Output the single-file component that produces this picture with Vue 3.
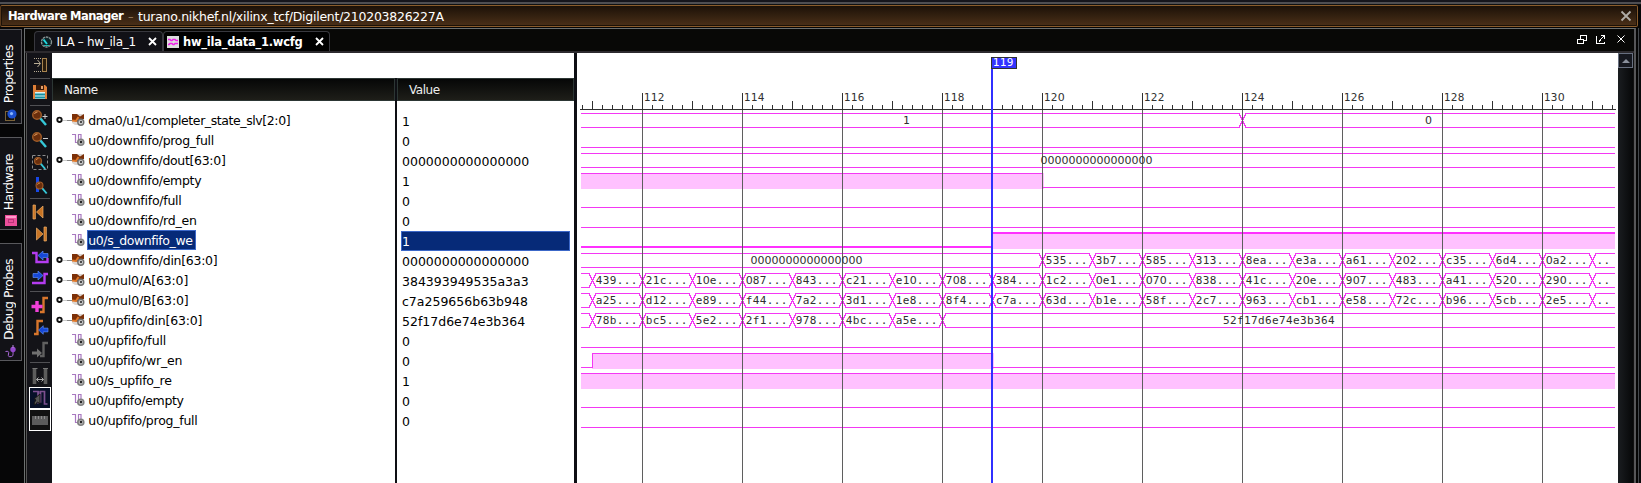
<script setup>
const rows = [
  { name: 'dma0/u1/completer_state_slv[2:0]', value: '1', bus: true, ls: -0.41 },
  { name: 'u0/downfifo/prog_full', value: '0', ls: -0.3 },
  { name: 'u0/downfifo/dout[63:0]', value: '0000000000000000', bus: true, ls: -0.32 },
  { name: 'u0/downfifo/empty', value: '1', ls: -0.3 },
  { name: 'u0/downfifo/full', value: '0', ls: -0.25 },
  { name: 'u0/downfifo/rd_en', value: '0', ls: -0.26 },
  { name: 'u0/s_downfifo_we', value: '1', selected: true, ls: -0.4 },
  { name: 'u0/downfifo/din[63:0]', value: '0000000000000000', bus: true, ls: -0.29 },
  { name: 'u0/mul0/A[63:0]', value: '384393949535a3a3', bus: true, ls: -0.16 },
  { name: 'u0/mul0/B[63:0]', value: 'c7a259656b63b948', bus: true, ls: -0.13 },
  { name: 'u0/upfifo/din[63:0]', value: '52f17d6e74e3b364', bus: true, ls: -0.17 },
  { name: 'u0/upfifo/full', value: '0', ls: -0.1 },
  { name: 'u0/upfifo/wr_en', value: '0', ls: -0.23 },
  { name: 'u0/s_upfifo_re', value: '1', ls: -0.3 },
  { name: 'u0/upfifo/empty', value: '0', ls: -0.32 },
  { name: 'u0/upfifo/prog_full', value: '0', ls: -0.25 },
]

// Wave canvas coordinates: x = 0 is the pane's left edge, y = 0 its top.
const X0 = 4
const X1 = 1038
const sx = (n) => 65 + (n - 112) * 50
const top = (r) => 60 + r * 20
const bot = (r) => 74 + r * 20

const ticks = []
for (let k = 0; k <= 103; k++) {
  const x = 5 + k * 10
  if (x > 1036) break
  const off = x - 65
  ticks.push({ x, h: off % 100 === 0 ? 16 : off % 50 === 0 ? 8 : 4 })
}
const majors = [112, 114, 116, 118, 120, 122, 124, 126, 128, 130]

const lows = [
  [1, X0, X1], [3, sx(120), X1], [4, X0, X1], [5, X0, X1], [11, X0, X1],
  [12, X0, sx(111)], [12, sx(119), X1], [14, X0, X1], [15, X0, X1],
]
const highs = [[3, X0, sx(120)], [12, sx(111), sx(119)], [13, X0, X1]]

const buses = [
  { r: 0, t: [124] },
  { r: 2, t: [] },
  { r: 7, t: range(120, 131) },
  { r: 8, t: range(111, 131) },
  { r: 9, t: range(111, 131) },
  { r: 10, t: range(111, 118) },
]
function range(a, b) {
  return Array.from({ length: b - a + 1 }, (_, i) => a + i)
}
function busPath({ r, t }) {
  const a = top(r) + 0.5
  const b = bot(r) + 0.5
  let d = ''
  let x = X0
  for (const n of t) {
    const c = sx(n) + 0.5
    d += `M${x} ${a}H${c - 3.5}L${c + 3.5} ${b}M${x} ${b}H${c - 3.5}L${c + 3.5} ${a}`
    x = c + 3.5
  }
  return d + `M${x} ${a}H${X1}M${x} ${b}H${X1}`
}

const cells = {
  7: [120, '535 3b7 585 313 8ea e3a a61 202 c35 6d4 0a2'],
  8: [111, '439 21c 10e 087 843 c21 e10 708 384 1c2 0e1 070 838 41c 20e 907 483 a41 520 290'],
  9: [111, 'a25 d12 e89 f44 7a2 3d1 1e8 8f4 c7a 63d b1e 58f 2c7 963 cb1 e58 72c b96 5cb 2e5'],
  10: [111, '78b bc5 5e2 2f1 978 4bc a5e'],
}
const labels = [
  { x: 326, y: 71, s: '1' },
  { x: 848, y: 71, s: '0' },
  { x: 463.5, y: 111, s: '0000000000000000' },
  { x: 173.5, y: 211, s: '0000000000000000' },
  { x: 646, y: 271, s: '52f17d6e74e3b364' },
]
for (const r of Object.keys(cells)) {
  const [start, list] = cells[r]
  list.split(' ').forEach((s, i) => {
    labels.push({ x: sx(start + i) + 3.7, y: 71 + r * 20, s: s + '...' })
  })
}
for (const r of [7, 8, 9]) labels.push({ x: 1019.6, y: 71 + r * 20, s: '..' })
for (const n of majors) labels.push({ x: sx(n) + 1.7, y: 48, s: String(n) })
labels.forEach((l) => (l.runs = l.s.match(/0+|[^0]+/g)))
</script>

<template>
  <div class="app">
    <div class="topline"></div>
    <div class="titlebar">
      <b>Hardware Manager</b><i>–</i><span>turano.nikhef.nl/xilinx_tcf/Digilent/210203826227A</span>
      <svg class="tclose" width="12" height="12" viewBox="0 0 12 12"><path d="M1.5 1.5L10.5 10.5M10.5 1.5L1.5 10.5" stroke="#b0aca6" stroke-width="1.8" /></svg>
    </div>
    <div class="body">
      <div class="side">
        <div class="stab p1">
          <span>Properties</span>
          <svg width="12" height="12" viewBox="0 0 12 12"><rect x=".5" y="2.5" width="9" height="9" fill="#111" stroke="#7a6238" /><circle cx="7" cy="5" r="4.6" fill="#1d50d0" /><circle cx="6.5" cy="4.6" r="1.6" fill="#8bb6ff" /></svg>
        </div>
        <div class="stab p2">
          <span>Hardware</span>
          <svg width="12" height="11" viewBox="0 0 12 11"><rect width="12" height="11" fill="#ec4f9c" /><rect x="1" y="1" width="10" height="2" fill="#ff9ccc" /><rect x="3.5" y="4.5" width="5" height="3" fill="none" stroke="#8a1c56" stroke-dasharray="1 1" /></svg>
        </div>
        <div class="stab p3">
          <span>Debug Probes</span>
          <svg width="12" height="13" viewBox="0 0 12 13"><path d="M.5 6.500q4-1 3 2.500t3 2.500q2 0 1.500-5" fill="none" stroke="#a868d8" /><circle cx="8" cy="4.500" r="2.700" fill="#9448cc" /><path d="M8 0v3" stroke="#b88ae0" /></svg>
        </div>
      </div>
      <div class="panel">
        <div class="tabs">
          <div class="tab t1">
            <svg width="13" height="12" viewBox="0 0 13 12"><circle cx="6.500" cy="6" r="5" fill="#0c2428" stroke="#8a9494" stroke-width="1.300" stroke-dasharray="2.500 .7" /><path d="M7 8L3.500 3.500" stroke="#20d8e0" stroke-width="2" /><path d="M4 9.500h5" stroke="#20b8b0" /></svg>
            <span>ILA – hw_ila_1</span>
            <svg class="x" width="9" height="9" viewBox="0 0 9 9"><path d="M1 1L8 8M8 1L1 8" stroke="#fff" stroke-width="1.800" /></svg>
          </div>
          <div class="tab t2">
            <svg width="12" height="12" viewBox="0 0 12 12"><rect width="12" height="12" fill="#ddd" /><path d="M1 3.500h2l1 1h1l1-1h2l1 1h2M1 8.500h1l1-1h2l1 1h1l1-1h3" fill="none" stroke="#f020e8" stroke-width="1.500" /></svg>
            <b>hw_ila_data_1.wcfg</b>
            <svg class="x" width="9" height="9" viewBox="0 0 9 9"><path d="M1 1L8 8M8 1L1 8" stroke="#fff" stroke-width="1.800" /></svg>
          </div>
          <svg class="winbtns" width="49" height="10" viewBox="0 0 49 10" fill="none" stroke="#fff" shape-rendering="crispEdges">
            <path d="M3.500 4V.500h6v5H7M.500 4.500h6v4h-6z" /><path d="M0 4.500h7" />
            <path d="M19.500 1v7.500h8V7M22 6.500l4.500-5M24 .500h3.500V4" />
            <path d="M40.500 .500L47.500 7.500M47.500 .500L40.500 7.500" shape-rendering="auto" />
          </svg>
        </div>
        <div class="content">
          <svg class="tools" width="24" height="430" viewBox="28 53 24 430">
            <defs>
              <g id="mag"><path d="M3 3L9 10" stroke="#35c8d8" stroke-width="2.400" /><circle r="4.300" fill="#6a2e0c" stroke="#a05c28" stroke-width="1.400" /><path d="M-2.500-1a3 3 0 0 1 3-2" fill="none" stroke="#e8a060" /></g>
              <path id="arr" d="M0 0L5-4.500V-2H10V2H5V4.500Z" fill="#1648d8" stroke="#5c8cf0" stroke-width=".7" />
            </defs>
            <path d="M30 78.500H50M30 105.500H50M30 198.500H50M30 291.500H50M30 362.500H50" stroke="#505054" />
            <g fill="none" stroke="#b8ac94"><path d="M34 58.500h8M34 71.500h8" stroke-dasharray="1 1" /><path d="M34 63.500h6M37.500 60l3 3.500l-3 3.500" /><rect x="42.500" y="58.500" width="4" height="13" fill="#2a1c0c" stroke="#a88450" /></g>
            <g><path d="M33 85h12l2 2v12H33z" fill="#e08038" /><rect x="36" y="85" width="8" height="5" fill="#3a1a08" /><rect x="41" y="86" width="2" height="3" fill="#e0a070" /><rect x="35" y="92" width="10" height="7" fill="#d8f4f4" /><path d="M35 94.500h10M35 97.500h10" stroke="#1890a0" stroke-width="1.800" /></g>
            <use href="#mag" x="37" y="115" /><path d="M42.500 116.500h5M45 114v5" stroke="#ccc" />
            <use href="#mag" x="37" y="137" /><path d="M43 138.500h5" stroke="#ccc" />
            <rect x="32.500" y="155.500" width="15" height="14" fill="none" stroke="#8c8c8c" stroke-dasharray="3 2" />
            <g transform="translate(38 161) scale(.8)"><use href="#mag" /></g>
            <path d="M37.500 177v15" stroke="#1848e8" stroke-width="3" />
            <g transform="translate(39.500 185.500) scale(.8)"><use href="#mag" /></g>
            <g fill="#c87424" stroke="#f0b068" stroke-width=".7"><path d="M33 205h2.400v14H33zM43 206v12l-6.500-6z" /><path d="M44 227h2.400v14H44zM36.500 228v12l6.500-6z" /></g>
            <g fill="none" stroke="#b43cf0" stroke-width="2.400"><path d="M32 253h4.500v9h11v-4" /><path d="M32 283h12.500v-9H48" /></g>
            <use href="#arr" x="38" y="255.500" /><use href="#arr" transform="translate(43 275.500) scale(-1 1)" />
            <g fill="none" stroke-width="2.400"><path d="M40 312h3.500v-14H48" stroke="#d8762c" /><path d="M34 334h3.500v-13H43" stroke="#d8762c" /><path d="M40 356h3.500v-13H48" stroke="#606060" /></g>
            <path d="M37 301v11M31.500 306.500h11" stroke="#f040d8" stroke-width="3.400" />
            <g transform="translate(38.500 330) scale(.95)"><use href="#arr" /></g>
            <path d="M32 351.500h5v-3l5 4.500l-5 4.500v-3h-5z" fill="#707070" />
            <path d="M34.500 368v16M45.500 368v16" stroke="#5c5c5c" stroke-width="3.600" /><path d="M32.500 368.500h5M43 368.500h5" stroke="#777" />
            <path d="M36.500 379.500h7M38.500 377.500l-2 2l2 2M41.500 377.500l2 2l-2 2" stroke="#aaa" fill="none" />
            <rect x="29.500" y="387.500" width="21" height="21" fill="#071028" stroke="#fff" />
            <path d="M33 391.500h5v12M38.500 391v11h2v-10.500h4v12.500h3" stroke="#7c5090" stroke-width="1.700" fill="none" /><path d="M40 394v10l-2.500-2l-2.500 3l-1-2l2-3l-2-1z" fill="#555" stroke="#141414" />
            <rect x="29.500" y="409.500" width="21" height="21" fill="#101010" stroke="#fff" />
            <rect x="32" y="416" width="16" height="9" fill="#5a5a5a" /><path d="M35.500 416v3M38.500 416v3M41.500 416v3M44.500 416v3" stroke="#8c8c8c" />
          </svg>
          <div class="lists">
            <div class="pad"></div>
            <div class="cols">
              <div class="names">
                <div class="hd">Name</div>
                <div v-for="r in rows" :key="r.name" class="row">
                  <svg v-if="r.bus" width="35" height="20" viewBox="0 0 35 20">
                    <path d="M11 10.500h4" stroke="#ccc" /><path d="M15 10.500h5" stroke="#888" /><circle cx="7.500" cy="9.800" r="2.200" fill="#fff" stroke="#111" stroke-width="1.900" />
                    <path d="M20 4h12v5l-4 6h-5l-3-2z" fill="#dcd6d2" /><path d="M20 4h5l3 2.500l4-2.500v5h-4l-2 3l-6-2z" fill="#7c3008" /><path d="M20 10.500l4 .5l2.500-4" stroke="#e07828" stroke-width="2" fill="none" />
                    <circle cx="28.800" cy="12.200" r="3" fill="#c8c8c8" stroke="#707070" stroke-width="1.400" /><circle cx="29" cy="12" r="1" fill="#222" />
                  </svg>
                  <svg v-else width="35" height="20" viewBox="0 0 35 20">
                    <path d="M20 4.500h3.500v8h3V4.500h2.500V9" fill="none" stroke="#a878c0" stroke-width="1.200" />
                    <circle cx="28.800" cy="12.200" r="3" fill="#b8b8b8" stroke="#808080" stroke-width="1.600" /><circle cx="29" cy="12" r="1.200" fill="#222" />
                  </svg>
                  <span :class="{ sel: r.selected }" :style="{ letterSpacing: r.ls + 'px' }">{{ r.name }}</span>
                </div>
              </div>
              <div class="vals">
                <div class="hd">Value</div>
                <div v-for="r in rows" :key="r.name" class="row"><span :class="{ sel: r.selected }">{{ r.value }}</span></div>
              </div>
            </div>
          </div>
          <svg class="wave" width="1041" height="430" viewBox="0 0 1041 430">
            <g fill="#ffc1ff">
              <rect v-for="h in highs" :key="h[0]" :x="h[1]" :y="top(h[0])" :width="h[2] - h[1] + (h[2] < X1 ? 2 : 0)" height="16" />
              <rect :x="sx(119)" y="180" :width="X1 - sx(119)" height="16" />
            </g>
            <g fill="none" stroke="#f437f4" shape-rendering="crispEdges">
              <path v-for="(l, i) in lows" :key="i" :d="`M${l[1]} ${bot(l[0]) + 0.5}H${l[2]}`" />
              <path v-for="h in highs" :key="h[0]" :d="`M${h[1]} ${top(h[0]) + 0.5}H${h[2]}`" />
              <path :d="`M${sx(120) + 0.5} 120V135M${sx(111) + 0.5} 300V315M${sx(119) + 0.5} 300V315`" />
              <path d="M4 194H415V180H1038" stroke="#ff30ff" stroke-width="2" />
              <path v-for="b in buses" :key="b.r" :d="busPath(b)" />
            </g>
            <g shape-rendering="crispEdges" fill="#303030">
              <rect x="3" y="56" width="1036" height="1" />
              <rect v-for="t in ticks" :key="t.x" :x="t.x" :y="t.h === 16 ? 40 : 56 - t.h" width="1" :height="t.h" />
              <rect v-for="n in majors" :key="n" :x="sx(n)" y="57" width="1" height="373" fill="#5f5f5f" />
            </g>
            <text v-for="(l, i) in labels" :key="i" :x="l.x" :y="l.y" class="lab"><tspan v-for="(s, j) in l.runs" :key="j" :class="s[0] === '0' ? 'z' : 'm'">{{ s }}</tspan></text>
            <rect x="414" y="16" width="2" height="414" fill="#3030ff" />
            <rect x="414.500" y="4.500" width="25" height="11" fill="#3333ff" stroke="#303030" />
            <text x="415.700" y="13" class="lab m flag">119</text>
          </svg>
          <div class="scroll"><div class="sbtn"><svg width="8" height="4" viewBox="0 0 8 4"><path d="M0 4L4 0L8 4z" fill="#8a909c" /></svg></div></div>
        </div>
      </div>
      <div class="edge"></div>
    </div>
  </div>
</template>

<style>
body { margin: 0; background: #08080a; overflow: hidden; }
</style>
<style scoped>
* { box-sizing: border-box; }
svg { display: block; flex: none; }
.app { width: 1641px; height: 483px; overflow: hidden; background: #060607; display: flex; flex-direction: column; font-family: "DejaVu Sans", sans-serif; font-size: 12.5px; font-variant-ligatures: none; white-space: nowrap; }
.topline { height: 5px; flex: none; background: linear-gradient(#15151c 0 2px, #4e4e52 2px 4px, #111 4px); }
.titlebar { height: 22px; width: 1638px; flex: none; border: 1px solid #8a5c2c; border-left-color: #5a3a1c; border-radius: 2px; background: linear-gradient(#1c1108, #4b3018); color: #fff; display: flex; align-items: center; padding: 0 5px 0 7px; box-shadow: inset 0 0 0 1px #1c1208; }
.titlebar b { font-size: 11.5px; width: 116px; flex: none; letter-spacing: -0.56px; }
.titlebar i { font-style: normal; color: #a08868; width: 14px; flex: none; padding-left: 4px; font-size: 11px; }
.titlebar span { letter-spacing: -0.26px; }
.tclose { margin-left: auto; }
.body { flex: 1; min-height: 0; display: flex; padding-top: 1px; }
.side { width: 24px; flex: none; }
.stab { width: 22px; border: 1px solid #58585c; border-left: 0; background: #121217; display: flex; flex-direction: column; align-items: center; justify-content: flex-end; color: #fff; gap: 4px; padding: 0 0 2px; }
.stab span { writing-mode: vertical-rl; transform: rotate(180deg); line-height: 16px; margin-right: 3px; letter-spacing: -0.5px; }
.p1 { height: 95px; margin-top: 1px; gap: 6px; }
.p2 { height: 93px; margin-top: 13px; padding-bottom: 3px; gap: 5px; }
.p3 { height: 118px; margin-top: 13px; gap: 5px; }
.panel { width: 1612px; flex: none; border: 1px solid #6c7070; border-bottom: 0; border-right: 2px solid #565658; display: flex; flex-direction: column; background: #080806; }
.tabs { height: 24px; flex: none; display: flex; align-items: flex-end; border-bottom: 2px solid #2c2a2e; padding-left: 9px; color: #fff; }
.tab { height: 20px; flex: none; border: 1px solid #38383e; border-bottom: 0; border-radius: 4px 4px 0 0; display: flex; align-items: center; }
.t1 { width: 129px; background: #111116; padding-left: 5px; }
.t1 span { width: 91px; flex: none; margin-left: 3.5px; letter-spacing: -0.3px; font-size: 12px; }
.t2 { width: 167px; background: #000; padding-left: 3px; }
.t2 b { font-size: 11.5px; width: 132px; flex: none; margin-left: 4px; letter-spacing: -0.25px; }
.winbtns { margin: 0 8px 6px auto; }
.content { flex: 1; min-height: 0; display: flex; padding-left: 3px; background: linear-gradient(90deg, #0a0a0a 0 1px, #555 1px 2px, #131318 2px); }
.lists { width: 522px; flex: none; display: flex; flex-direction: column; background: #fff; }
.pad { height: 25px; flex: none; }
.cols { flex: 1; display: flex; }
.hd { height: 23px; border: 1px solid #2c3634; background: linear-gradient(#060707, #1e1e19); color: #eee; line-height: 22px; padding-left: 11px; margin-bottom: 9px; font-size: 12px; letter-spacing: -0.45px; }
.names { width: 343px; flex: none; }
.vals { flex: 1; border-left: 2px solid #0e0f14; }
.vals .hd { margin-bottom: 10px; }
.row { height: 20px; display: flex; line-height: 20px; color: #000; }
.names .row span { height: 20px; line-height: 21px; padding: 0 3px 0 1.3px; }
.vals .row span { margin-left: 4px; width: 169px; padding-left: 1px; line-height: 21px; }
.names .row .sel, .vals .row .sel { background: #062a78; color: #fff; box-shadow: inset 0 0 0 1px #3c68c8; }
.wave { background: #fff; box-shadow: -3px 0 0 #0e0f14; margin-left: 3px; }
.lab { font-size: 11px; fill: #303030; white-space: pre; }
.z { font-family: "DejaVu Sans", sans-serif; }
.m { font-family: "DejaVu Sans Mono", monospace; letter-spacing: 0.38px; }
.lab.flag { fill: #fff; }
.scroll { flex: 1; background: linear-gradient(90deg, #1a1d20, #060708); border-right: 1px solid #111; }
.sbtn { width: 15px; height: 15px; border: 1px solid #687080; background: #16181f; display: flex; align-items: center; justify-content: center; }
.edge { flex: 1; background: linear-gradient(90deg, #050505 0 2px, #44484c 2px 3px, #0a0a0c 3px); }
</style>
